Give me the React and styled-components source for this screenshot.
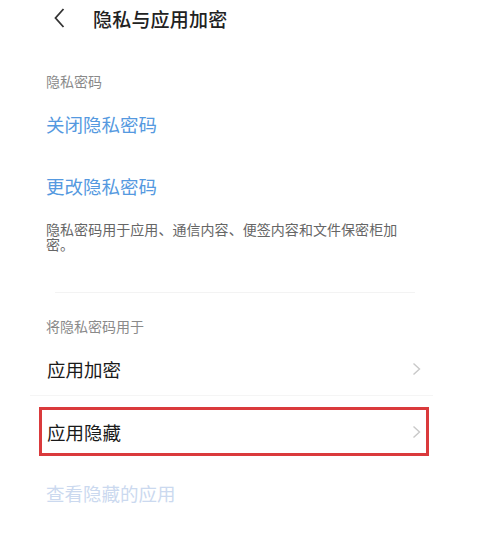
import React from "react";
import styled, { createGlobalStyle } from "styled-components";

const GlobalStyle = createGlobalStyle`
    body {
        margin: 0;
        background: #ffffff;
        font-family: "Noto Sans CJK SC", "Noto Sans", sans-serif;
    }
`

function Chevron() {
    return (
        <svg width="9" height="14" viewBox="0 0 9 14">
            <path d="M1.5 1.5 L7.5 7 L1.5 12.5" fill="none" stroke="#c9c9c9" strokeWidth="1.4" />
        </svg>
    )
}

function BackArrow() {
    return (
        <svg width="11" height="20" viewBox="0 0 11 20">
            <path d="M9.5 1 L1.5 10 L9.5 19" fill="none" stroke="#333333" strokeWidth="1.8" />
        </svg>
    )
}

export default function App() {
    return (
        <>
            <GlobalStyle />
            <Page>
                <Header>
                    <BackArrow />
                    <Title>隐私与应用加密</Title>
                </Header>

                <Label $top={30}>隐私密码</Label>
                <Action $top={8}>关闭隐私密码</Action>
                <Action $top={22}>更改隐私密码</Action>
                <Description>
                    隐私密码用于应用、通信内容、便签内容和文件保密柜加密。
                </Description>

                <Divider />

                <Label $top={18}>将隐私密码用于</Label>
                <NavRow $top={3}>
                    <span>应用加密</span>
                    <Chevron />
                </NavRow>
                <RowDivider />
                <NavRow $top={11} $highlighted>
                    <span>应用隐藏</span>
                    <Chevron />
                </NavRow>
                <Action $top={17} $disabled>查看隐藏的应用</Action>
            </Page>
        </>
    )
}

const Page = styled.div`
    width: 496px;
    min-height: 540px;
    display: flex;
    flex-direction: column;
`

const Header = styled.div`
    height: 36px;
    display: flex;
    align-items: center;
    padding-left: 54px;
`

const Title = styled.div`
    margin-left: 28px;
    font-size: 19px;
    font-weight: 500;
    color: #222222;
    letter-spacing: 0.2px;
`

const Label = styled.div`
    margin-top: ${p => p.$top}px;
    padding-left: 46px;
    height: 30px;
    line-height: 30px;
    font-size: 14px;
    color: #8a8a8a;
`

const Action = styled.div`
    margin-top: ${p => p.$top}px;
    padding-left: 46px;
    height: 40px;
    line-height: 40px;
    font-size: 18.5px;
    color: ${p => p.$disabled ? "#cbd9ef" : "#5599e0"};
`

const Description = styled.div`
    margin-top: 16px;
    margin-left: 46px;
    width: 372px;
    font-size: 14px;
    letter-spacing: 0.05px;
    line-height: 15px;
    color: #666666;
`

const Divider = styled.div`
    margin: 40px 81px 0 55px;
    height: 1px;
    background: #f3f3f3;
`

const RowDivider = styled.div`
    margin: 2px 63px 0 30px;
    height: 1px;
    background: #f5f5f5;
`

const NavRow = styled.div`
    margin: ${p => p.$top}px 0 0 39px;
    width: 390px;
    height: 49px;
    box-sizing: border-box;
    border: 3px solid ${p => p.$highlighted ? "#da3a3c" : "transparent"};
    padding: 0 5px 0 5px;
    display: flex;
    align-items: center;
    justify-content: space-between;
    font-size: 18.5px;
    color: #1a1a1a;
`
